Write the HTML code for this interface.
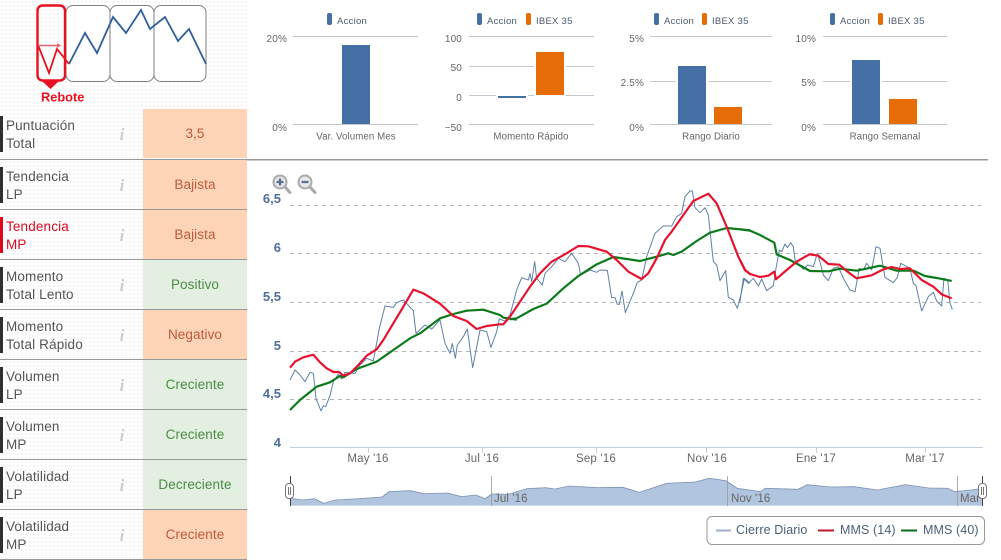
<!DOCTYPE html>
<html><head><meta charset="utf-8">
<style>
html,body{margin:0;padding:0;background:#fff}
#p{position:relative;width:1001px;height:560px;overflow:hidden;background:#fff;font-family:"Liberation Sans",sans-serif}
#side{position:absolute;left:0;top:0;width:247px;height:560px;background-color:#fff;background-image:radial-gradient(#ececec 0.7px,transparent 0.9px);background-size:4px 4px}
.bar{position:absolute;left:0;width:3px;height:36px;background:#2f2f2f}
.lb{position:absolute;left:6px;margin-top:1px;font-size:13.5px;line-height:18px;color:#555;letter-spacing:.15px;white-space:nowrap}
.i{position:absolute;left:118px;width:8px;margin-top:1px;text-align:center;font:italic bold 17px "Liberation Serif",serif;color:#ccc}
.c{position:absolute;left:143px;width:104px;height:49px;line-height:50px;text-align:center;font-size:13.5px;letter-spacing:.1px}
.r{background:#fdd4b5;color:#bf5a40}
.g{background:#e2efe1;color:#4b8c45}
.d{position:absolute;left:0;width:247px;height:1px;background:#999}
svg{position:absolute;left:0;top:0}
svg text{font-family:"Liberation Sans",sans-serif}
</style></head><body>
<div id="p">
<div id="side">
<div class="bar" style="top:116px"></div><div class="lb" style="top:116px">Puntuación<br>Total</div><div class="i" style="top:124px">i</div><div class="c r" style="top:109px">3,5</div><div class="d" style="top:159px"></div>
<div class="bar" style="top:167px"></div><div class="lb" style="top:167px">Tendencia<br>LP</div><div class="i" style="top:175px">i</div><div class="c r" style="top:160px">Bajista</div><div class="d" style="top:209px"></div>
<div class="bar" style="top:217px;background:#e2061c"></div><div class="lb" style="top:217px;color:#d90a23">Tendencia<br>MP</div><div class="i" style="top:225px">i</div><div class="c r" style="top:210px">Bajista</div><div class="d" style="top:259px"></div>
<div class="bar" style="top:267px"></div><div class="lb" style="top:267px">Momento<br>Total Lento</div><div class="i" style="top:275px">i</div><div class="c g" style="top:260px">Positivo</div><div class="d" style="top:309px"></div>
<div class="bar" style="top:317px"></div><div class="lb" style="top:317px">Momento<br>Total Rápido</div><div class="i" style="top:325px">i</div><div class="c r" style="top:310px">Negativo</div><div class="d" style="top:359px"></div>
<div class="bar" style="top:367px"></div><div class="lb" style="top:367px">Volumen<br>LP</div><div class="i" style="top:375px">i</div><div class="c g" style="top:360px">Creciente</div><div class="d" style="top:409px"></div>
<div class="bar" style="top:417px"></div><div class="lb" style="top:417px">Volumen<br>MP</div><div class="i" style="top:425px">i</div><div class="c g" style="top:410px">Creciente</div><div class="d" style="top:459px"></div>
<div class="bar" style="top:467px"></div><div class="lb" style="top:467px">Volatilidad<br>LP</div><div class="i" style="top:475px">i</div><div class="c g" style="top:460px">Decreciente</div><div class="d" style="top:509px"></div>
<div class="bar" style="top:517px"></div><div class="lb" style="top:517px">Volatilidad<br>MP</div><div class="i" style="top:525px">i</div><div class="c r" style="top:510px">Creciente</div><div class="d" style="top:559px"></div>
</div>

<svg width="1001" height="560" viewBox="0 0 1001 560">
<!-- pattern thumb -->
<g fill="#fff" stroke="#808080" stroke-width="1">
<rect x="66" y="5.5" width="44" height="76" rx="7"/>
<rect x="110" y="5.5" width="44" height="76" rx="7"/>
<rect x="154" y="5.5" width="52" height="76" rx="7"/>
</g>
<polyline points="69,64 85,33 97,53 113,17 126,33 141,10 150,29 165,17 178,41 189,29 206,64" fill="none" stroke="#2f5f9f" stroke-width="1.8"/>
<rect x="37.5" y="5.5" width="27.5" height="75" rx="5" fill="none" stroke="#e8111f" stroke-width="2.4"/>
<polyline points="38,45 49,73 57,49 69,64" fill="none" stroke="#e8111f" stroke-width="1.8"/>
<path d="M38 45.500H58" stroke="#e8646e" stroke-width="1.400"/><path d="M57 43L61 45.500L57 48Z" fill="#e8646e"/>
<path d="M42 81H59L50.500 89Z" fill="#e8111f"/>
<text x="41" y="101.500" font-size="12.800" font-weight="bold" fill="#e8111f">Rebote</text>

<!-- top divider -->
<rect x="247" y="159" width="741" height="1.500" fill="#999"/>

<!-- bar chart grids -->
<g fill="#c4c8d0">
<rect x="293" y="36" width="125" height="1"/><rect x="293" y="124" width="125" height="1"/>
<rect x="469" y="36" width="125" height="1"/><rect x="469" y="66" width="125" height="1"/><rect x="469" y="95" width="125" height="1"/><rect x="469" y="124" width="125" height="1"/>
<rect x="650" y="36" width="122" height="1"/><rect x="650" y="81" width="122" height="1"/><rect x="650" y="124" width="122" height="1"/>
<rect x="823" y="36" width="124" height="1"/><rect x="823" y="81" width="124" height="1"/><rect x="823" y="124" width="124" height="1"/>
</g>
<g fill="#4570a5">
<rect x="342" y="45" width="28" height="79"/>
<rect x="496" y="95" width="32" height="4" fill="#fff"/><rect x="498" y="96" width="28" height="2"/>
<rect x="676" y="66" width="32" height="58" fill="#fff"/><rect x="678" y="66" width="28" height="58"/>
<rect x="850" y="60" width="32" height="64" fill="#fff"/><rect x="852" y="60" width="28" height="64"/>
</g>
<g fill="#e66c08">
<rect x="534" y="52" width="32" height="44" fill="#fff"/><rect x="536" y="52" width="28" height="43"/>
<rect x="712" y="107" width="32" height="17" fill="#fff"/><rect x="714" y="107" width="28" height="17"/>
<rect x="887" y="99" width="32" height="25" fill="#fff"/><rect x="889" y="99" width="28" height="25"/>
</g>
<!-- legend markers -->
<g fill="#4570a5"><rect x="327" y="13" width="5" height="12" rx="2"/><rect x="477" y="13" width="5" height="12" rx="2"/><rect x="654" y="13" width="5" height="12" rx="2"/><rect x="830" y="13" width="5" height="12" rx="2"/></g>
<g fill="#e66c08"><rect x="526" y="13" width="5" height="12" rx="2"/><rect x="702" y="13" width="5" height="12" rx="2"/><rect x="878" y="13" width="5" height="12" rx="2"/></g>
<g font-size="9.500" fill="#4a5a70" letter-spacing=".25">
<text x="337" y="24">Accion</text>
<text x="487" y="24">Accion</text><text x="536" y="24">IBEX 35</text>
<text x="664" y="24">Accion</text><text x="712" y="24">IBEX 35</text>
<text x="840" y="24">Accion</text><text x="888" y="24">IBEX 35</text>
</g>
<g font-size="10" fill="#666" letter-spacing=".15" text-anchor="end">
<text x="287" y="42">20%</text><text x="287" y="131">0%</text>
<text x="462" y="42">100</text><text x="462" y="71">50</text><text x="462" y="101">0</text><text x="462" y="131">−50</text>
<text x="644" y="42">5%</text><text x="644" y="86">2.5%</text><text x="644" y="131">0%</text>
<text x="816" y="42">10%</text><text x="816" y="86">5%</text><text x="816" y="131">0%</text>
</g>
<g font-size="9.700" fill="#666" letter-spacing=".1" text-anchor="middle">
<text x="356" y="139.500">Var. Volumen Mes</text>
<text x="531" y="139.500">Momento Rápido</text>
<text x="711" y="139.500">Rango Diario</text>
<text x="885" y="139.500">Rango Semanal</text>
</g>

<!-- main grid -->
<g stroke="#b5b5b5" stroke-width="1" stroke-dasharray="4 4">
<path d="M290 205.500H981M290 253.500H981M290 302.500H981M290 351.500H981M290 399.500H981"/>
</g>
<path d="M290 447.500H983" stroke="#c0d0e0"/>
<path d="M368.500 447V453M482.500 447V453M596.500 447V453M706.500 447V453M816.500 447V453M925.500 447V453" stroke="#c0d0e0"/>
<g font-size="13" font-weight="bold" fill="#4f6f9c" text-anchor="end">
<text x="281" y="203">6,5</text><text x="281" y="252">6</text><text x="281" y="301">5,5</text><text x="281" y="350">5</text><text x="281" y="398">4,5</text><text x="281" y="447">4</text>
</g>
<g font-size="11.500" fill="#666" text-anchor="middle" letter-spacing=".2">
<text x="368" y="462">May '16</text><text x="482" y="462">Jul '16</text><text x="596" y="462">Sep '16</text><text x="707" y="462">Nov '16</text><text x="816" y="462">Ene '17</text><text x="925" y="462">Mar '17</text>
</g>

<!-- zoom icons -->
<g fill="#fff" stroke="#aaa" stroke-width="2">
<circle cx="280" cy="182" r="6.500" fill="#e8e8ec"/><path d="M285 187L290 192.500" stroke-width="3" stroke-linecap="round"/>
<circle cx="305" cy="182" r="6.500" fill="#e8e8ec"/><path d="M310 187L315 192.500" stroke-width="3" stroke-linecap="round"/>
</g>
<path d="M276.500 182H283.500M280 178.500V185.500M301.500 182H308.500" stroke="#5a6f8c" stroke-width="2.200"/>

<!-- series: coordinates in 3x space -->
<g fill="none" stroke-linejoin="round">
<g transform="translate(260,165) scale(.33333)">
<polyline stroke="#5f80a8" stroke-width="3" points="90,645 105,615 120,630 135,650 150,622 160,625 168,700 183,738 190,722 197,725 210,692 220,650 235,628 245,642 255,622 285,625 300,600 320,580 340,588 358,490 375,423 400,427 410,413 430,405 460,437 468,505 495,480 515,492 540,465 555,535 570,565 577,535 586,580 592,540 610,515 622,492 638,608 660,495 680,500 693,547 710,500 718,462 735,468 750,450"/>
</g>
<g transform="translate(500,165) scale(.33333)">
<polyline stroke="#5f80a8" stroke-width="3" points="30,450 50,375 65,338 85,345 90,325 95,350 104,290 110,340 127,360 135,325 155,305 175,280 195,290 215,265 235,295 242,330 270,315 290,322 300,315 322,316 335,398 345,398 352,418 358,418 366,378 376,443 400,385 412,352 425,345 440,275 465,205 490,183 515,183 530,155 545,145 555,95 570,78 577,78 585,128 600,143 615,128 625,150 640,290 650,300 660,347 677,317 685,397 700,405 712,430 725,380 733,340 750,355"/>
</g>
<g transform="translate(740,165) scale(.33333)">
<polyline stroke="#5f80a8" stroke-width="3" points="0,410 10,340 25,355 40,340 55,363 65,342 80,377 100,362 108,310 118,255 125,260 135,237 142,248 152,233 160,245 165,285 190,313 203,300 220,305 232,265 240,290 250,330 265,347 280,310 295,305 310,340 330,375 345,380 358,310 370,315 380,295 395,315 408,245 420,250 435,337 460,353 472,337 482,295 510,310 520,355 528,362 545,438 565,395 580,382 590,408 605,423 612,340 623,345 630,415 637,433"/>
</g>
<g transform="translate(260,165) scale(.33333)">
<polyline stroke="#0c7a1a" stroke-width="6.500" points="90,735 120,705 170,665 210,652 240,633 250,637 290,612 350,590 400,555 450,520 480,505 540,460 580,447 620,437 670,434 720,450 730,458 750,461 770,464"/>
<polyline stroke="#e8112d" stroke-width="6.500" points="90,608 105,590 130,577 160,569 180,592 200,610 220,621 237,621 250,632 270,625 295,600 320,572 350,553 370,525 400,475 430,425 460,374 490,385 540,416 580,453 620,468 650,492 680,483 720,478 730,478 750,455"/>
</g>
<g transform="translate(500,165) scale(.33333)">
<polyline stroke="#0c7a1a" stroke-width="6.500" points="30,463 50,460 100,432 140,416 190,370 235,333 290,298 340,276 420,288 470,275 505,265 520,270 545,260 590,228 630,203 680,189 750,196"/>
<polyline stroke="#e8112d" stroke-width="6.500" points="30,455 60,410 90,365 120,325 155,290 200,265 235,243 265,244 320,260 350,285 385,320 425,342 445,325 470,280 495,225 515,200 550,150 580,108 625,86 650,115 680,185 715,275 735,315 750,327"/>
</g>
<g transform="translate(740,165) scale(.33333)">
<polyline stroke="#0c7a1a" stroke-width="6.500" points="0,193 30,197 60,210 103,233 110,268 150,285 210,318 265,319 300,311 350,317 420,302 470,317 520,317 555,333 590,339 635,348"/>
<polyline stroke="#e8112d" stroke-width="6.500" points="0,285 15,315 30,327 60,336 85,332 103,320 108,343 140,315 170,290 208,268 235,272 265,297 298,299 320,318 350,340 395,331 430,313 455,306 480,312 510,310 545,345 580,365 605,388 635,400"/>
</g>
</g>

<!-- navigator -->
<g transform="translate(270,450) scale(.46729,.33333)">
<polygon fill="#b2c5de" points="44,167 44,145 70,150 95,146 115,160 140,150 190,146 240,141 255,125 300,122 330,131 380,129 410,140 440,135 460,146 475,132 510,133 550,116 590,113 610,117 640,108 700,113 755,112 790,127 850,100 910,96 940,85 975,92 1000,115 1050,125 1060,115 1130,118 1150,104 1200,111 1250,110 1300,120 1360,104 1410,114 1450,115 1465,125 1500,120 1528,115 1528,167"/>
<polyline fill="none" stroke="#7d96b8" stroke-width="2.500" points="44,145 70,150 95,146 115,160 140,150 190,146 240,141 255,125 300,122 330,131 380,129 410,140 440,135 460,146 475,132 510,133 550,116 590,113 610,117 640,108 700,113 755,112 790,127 850,100 910,96 940,85 975,92 1000,115 1050,125 1060,115 1130,118 1150,104 1200,111 1250,110 1300,120 1360,104 1410,114 1450,115 1465,125 1500,120 1528,115"/>
</g>
<path d="M491.500 476V506M727.500 476V506M957.500 476V506" stroke="#9a9a9a" stroke-width=".8"/>
<g font-size="11.500" fill="#666" letter-spacing=".1">
<text x="494" y="502">Jul '16</text><text x="731" y="502">Nov '16</text>
<text x="960" y="502">Mar '1</text>
</g>
<rect x="983" y="490" width="18" height="16" fill="#fff"/>
<path d="M290.500 476V506M982.500 476V506" stroke="#444" stroke-width="1"/>
<g fill="#fff" stroke="#777" stroke-width="1">
<rect x="285.500" y="483.500" width="8" height="15" rx="3.500"/>
<rect x="978.500" y="483.500" width="8" height="15" rx="3.500"/>
</g>
<path d="M288.500 487V495M290.500 487V495M981.500 487V495M983.500 487V495" stroke="#777" stroke-width="1"/>

<!-- legend -->
<rect x="707" y="516.500" width="277.500" height="28" rx="5" fill="#fff" stroke="#999"/>
<path d="M716 530.500H731" stroke="#9db2c8" stroke-width="2"/>
<path d="M818 530.500H834" stroke="#c01a30" stroke-width="2"/>
<path d="M901 530.500H917" stroke="#0c6a1a" stroke-width="2"/>
<g font-size="12.500" fill="#4a5f78" letter-spacing=".1">
<text x="736" y="534">Cierre Diario</text>
<text x="840" y="534">MMS (14)</text>
<text x="923" y="534">MMS (40)</text>
</g>
</svg>
</div>
</body></html>
